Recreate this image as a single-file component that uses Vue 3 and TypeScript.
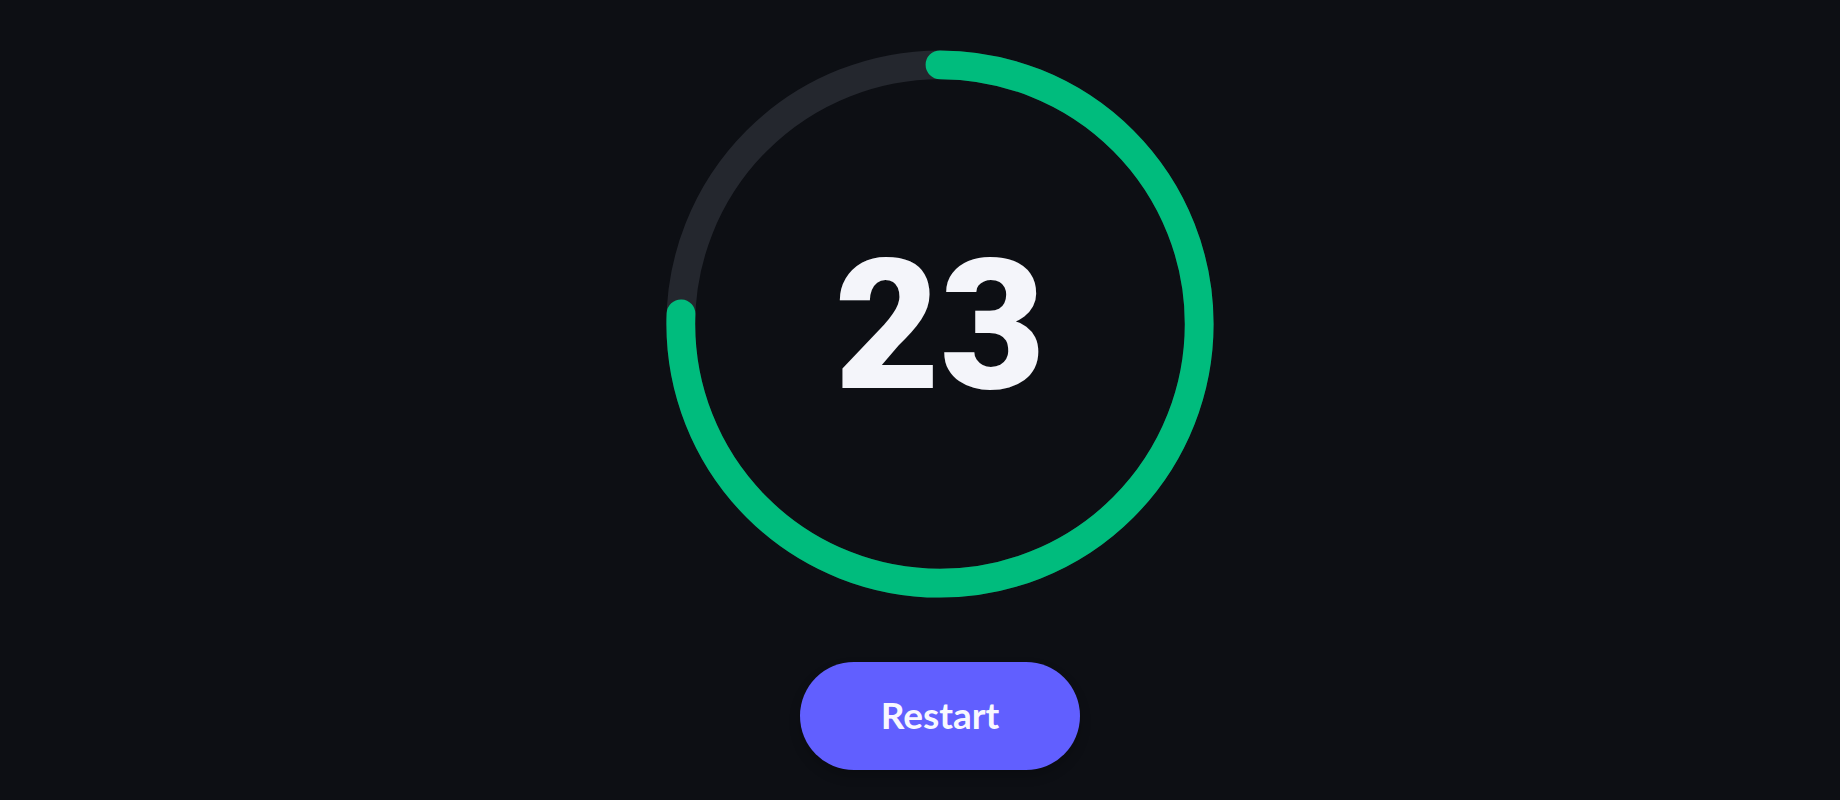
<script setup lang="ts">
import { computed, onBeforeUnmount, ref } from 'vue'

const duration = 30
const radius = 45
const circumference = 2 * Math.PI * radius

const remaining = ref(22.68)
let timer: number | undefined

const label = computed(() => Math.ceil(remaining.value))
const offset = computed(() => circumference * (1 - remaining.value / duration))

function stop() {
  window.clearInterval(timer)
}

function restart() {
  stop()
  remaining.value = duration
  timer = window.setInterval(() => {
    remaining.value = Math.max(0, remaining.value - 0.1)
    if (remaining.value === 0) stop()
  }, 100)
}

onBeforeUnmount(stop)
</script>

<template>
  <main class="page">
    <div class="dial" role="timer">
      <svg class="ring" viewBox="0 0 100 100" aria-hidden="true">
        <circle class="track" cx="50" cy="50" :r="radius" />
        <circle
          class="progress"
          cx="50"
          cy="50"
          :r="radius"
          :stroke-dasharray="circumference"
          :stroke-dashoffset="offset"
          transform="rotate(-90 50 50)"
        />
      </svg>
      <span class="count">{{ label }}</span>
    </div>
    <button class="restart" type="button" @click="restart">Restart</button>
  </main>
</template>

<style>
body {
  background: #0d0f14;
}
</style>

<style scoped>
.page {
  display: flex;
  flex-direction: column;
  align-items: center;
  gap: 50px;
  box-sizing: border-box;
  min-height: 100vh;
  padding: 36px 0 30px 40px;
  background: #0d0f14;
}

.dial {
  display: grid;
  place-items: center;
  width: 576px;
  max-width: 100%;
}

.ring,
.count {
  grid-area: 1 / 1;
}

.ring {
  display: block;
  width: 100%;
}

.track,
.progress {
  fill: none;
  stroke-width: 5;
}

.track {
  stroke: #24272e;
}

.progress {
  stroke: #00bc7d;
  stroke-linecap: round;
}

.count {
  padding-top: 4px;
  font-family: Roboto, sans-serif;
  font-size: 182px;
  font-weight: 900;
  line-height: 192px;
  color: #f4f5fa;
}

.restart {
  min-width: 280px;
  padding: 31px 64px 33px;
  border: 0;
  border-radius: 54px;
  background: #615fff;
  box-shadow: 0 6px 12px rgba(0, 0, 0, 0.2);
  font-family: Lato, sans-serif;
  font-size: 37px;
  font-weight: 700;
  line-height: 44px;
  color: #f8f8ff;
  cursor: pointer;
}
</style>
